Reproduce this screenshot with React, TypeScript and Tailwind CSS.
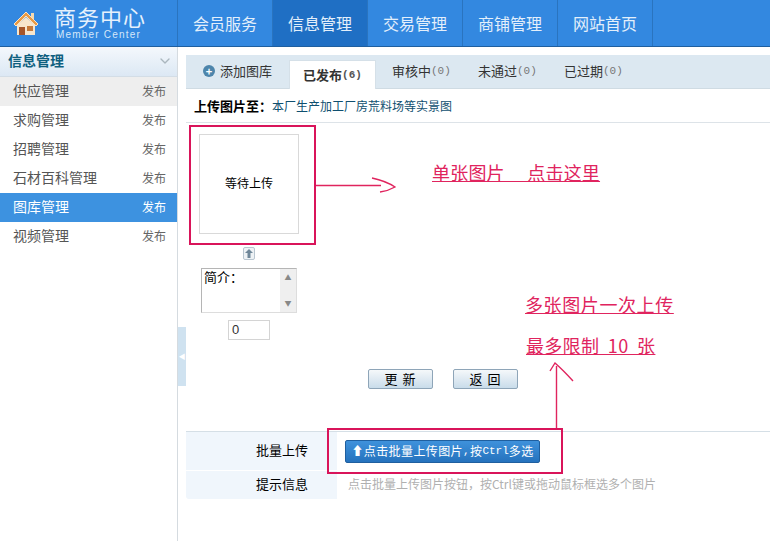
import { ChevronDown } from 'lucide-react';

const navItems = ['会员服务', '信息管理', '交易管理', '商铺管理', '网站首页'];
const sideItems = ['供应管理', '求购管理', '招聘管理', '石材百科管理', '图库管理', '视频管理'];
const tabs = ['审核中', '未通过', '已过期'];

function HomeIcon() {
  return (
    <svg width="26" height="25" viewBox="0 0 26 25">
      <path d="M13 1 L25 13 L23 15 L13 5 L3 15 L1 13 Z" fill="#e89a45" stroke="#fbe3c4" strokeWidth="1" />
      <path d="M18 2h3v7l-3-3z" fill="#f3d9b0" />
      <path d="M4 14 L13 6 L22 14 V24 H4 Z" fill="#f7e6cc" />
      <rect x="6" y="16" width="6" height="8" fill="#a5562a" />
      <rect x="14" y="15" width="6" height="5" fill="#c77a3a" />
    </svg>
  );
}

export default function App() {
  return (
    <div className="relative w-[770px] h-[541px] overflow-hidden bg-white font-['Noto_Sans_CJK_SC',sans-serif]">
      {/* top bar */}
      <header className="flex h-[47px] bg-[#3388e0] border-b border-[#1f5f9f]">
        <div className="flex w-[178px] items-center gap-[15px] pl-[13px] border-r border-[#2a74bf]">
          <HomeIcon />
          <div>
            <div className="text-[22px] leading-[20px] tracking-[1px] text-[#e6f1fc]">商务中心</div>
            <div className="mt-[3px] pl-[2px] text-[10px] leading-[12px] tracking-[1.2px] font-['Liberation_Sans',sans-serif] text-[#d5e7f9]">Member Center</div>
          </div>
        </div>
        {navItems.map((item) => (
          <div
            key={item}
            className={`flex w-[95px] items-center justify-center border-r border-[#2a74bf] text-[16px] text-[#e3effb] ${item === '信息管理' ? 'bg-[#1f6fc4]' : ''}`}
          >
            {item}
          </div>
        ))}
      </header>

      <div className="flex h-[494px]">
        {/* sidebar */}
        <aside className="w-[178px] shrink-0 border-r border-[#d5dbe0]">
          <div className="flex h-[30px] items-center justify-between pb-[2px] pl-2 pr-[4px] border-b border-[#d3dde6] bg-gradient-to-b from-[#f4f8fc] to-[#dce8f4]">
            <span className="text-[14px] font-bold text-[#0f5f7f]">信息管理</span>
            <ChevronDown size={16} className="text-[#aab6be]" />
          </div>
          {sideItems.map((item, i) => {
            const active = item === '图库管理';
            return (
              <div
                key={item}
                className={`flex h-[29px] items-center justify-between pb-[2px] pl-[13px] pr-[11px] text-[14px] ${active ? 'bg-[#3d92e0] text-white' : 'text-[#555]'} ${i === 0 ? 'bg-[#eeeeee]' : ''}`}
              >
                <span>{item}</span>
                <span className={`text-[12px] ${active ? 'text-white' : 'text-[#666]'}`}>发布</span>
              </div>
            );
          })}
        </aside>

        {/* main */}
        <main className="relative flex-1 pt-2">
          <div className="absolute left-0 top-[280px] flex h-[59px] w-[8px] items-center justify-center bg-[#cfe2f0] text-[7px] text-white">◀</div>

          <div className="ml-2 flex h-[34px] items-end border-b border-[#cfdbe3] bg-[#dce8f1] pl-[17px]">
            <div className="flex h-[34px] w-[86px] items-center gap-[5px] text-[13px] text-[#333]">
              <span className="flex h-[12px] w-[12px] items-center justify-center rounded-full bg-[#4d85ab] text-[11px] font-bold leading-none text-white">+</span>
              添加图库
            </div>
            <div className="-mb-px flex h-[29px] w-[87px] items-center justify-center border-x border-t border-[#d5e0e8] bg-white text-[13px] font-bold text-[#333]">
              已发布<span className="font-['Liberation_Mono',monospace] text-[11px] text-[#555]">(6)</span>
            </div>
            {tabs.map((t) => (
              <div key={t} className="flex h-[34px] w-[86px] items-center pl-[16px] text-[13px] text-[#333]">
                {t}<span className="font-['Liberation_Mono',monospace] text-[11px] text-[#777]">(0)</span>
              </div>
            ))}
          </div>

          <div className="ml-2 flex h-[34px] items-center border-b border-[#dde3e8] pl-2 text-[12px] text-[#0f4f6f]">
            <b className="text-[13px] text-black">上传图片至：</b>本厂生产加工厂房荒料场等实景图
          </div>

          <div className="ml-[21px] mt-[11px] flex h-[100px] w-[100px] items-center justify-center border border-[#d9d9d9] pb-[3px] text-[12px] text-black">
            等待上传
          </div>
          <div className="ml-[65px] mt-[13px] flex h-[13px] w-[12px] items-center justify-center rounded-[2px] border border-[#b9c6d0] bg-[#eef2f5]">
            <svg width="8" height="9" viewBox="0 0 8 9">
              <path d="M4 0 L8 4 H5.5 V9 H2.5 V4 H0 Z" fill="#6f8799" />
            </svg>
          </div>

          <div className="ml-[23px] mt-[8px] flex h-[45px] w-[96px] border border-[#b5b5b5] border-r-[#dddddd] border-b-[#dddddd]">
            <div className="flex-1 pl-[2px] text-[13px] leading-[16px] text-black">简介：</div>
            <div className="flex w-[16px] flex-col items-center justify-between bg-[#efefef] py-[5px] text-[7px] leading-none text-[#888]">
              <span>▲</span>
              <span>▼</span>
            </div>
          </div>
          <div className="ml-[50px] mt-[7px] flex h-[20px] w-[42px] items-center border border-[#d4d4d4] pl-[3px] font-['Liberation_Sans',sans-serif] text-[13px] text-[#333]">0</div>

          <div className="ml-[190px] mt-[29px] flex gap-[20px]">
            <div className="flex h-[20px] w-[65px] items-center justify-center rounded-[2px] border border-[#8ea5b8] bg-gradient-to-b from-[#f5f8fa] to-[#c9dcea] text-[13px] tracking-[1px] text-black">更 新</div>
            <div className="flex h-[20px] w-[65px] items-center justify-center rounded-[2px] border border-[#8ea5b8] bg-gradient-to-b from-[#f5f8fa] to-[#c9dcea] text-[13px] tracking-[1px] text-black">返 回</div>
          </div>

          <div className="ml-2 mt-[42px] border-t border-[#d5dfe6]">
            <div className="flex h-[38px]">
              <div className="flex w-[151px] items-center justify-end bg-[#f0f6fc] pb-[2px] pr-[29px] text-[13px] text-black">批量上传</div>
              <div className="flex flex-1 items-center pl-[8px]">
                <div className="flex h-[23px] w-[195px] items-center justify-center rounded-[2px] border border-[#1f5f9f] bg-gradient-to-b from-[#3f92dc] to-[#2572bd] text-[12px] tracking-[0.4px] text-white">
                  ⬆点击批量上传图片<span className="font-['Liberation_Mono',monospace] text-[11px]">,</span>按<span className="font-['Liberation_Mono',monospace] text-[11px] tracking-normal">Ctrl</span>多选
                </div>
              </div>
            </div>
            <div className="mt-px flex h-[28px]">
              <div className="flex w-[151px] items-center justify-end rounded-bl-[3px] bg-[#f0f6fc] pb-[2px] pr-[29px] text-[13px] text-black">提示信息</div>
              <div className="flex flex-1 items-center pb-[2px] pl-[11px] text-[12px] text-[#b0b0b0]">点击批量上传图片按钮，按Ctrl键或拖动鼠标框选多个图片</div>
            </div>
          </div>
        </main>
      </div>

      {/* hand-drawn annotations on top of the page */}
      <div className="absolute left-[189px] top-[125px] h-[120px] w-[127px] border-[2px] border-[#d9145a]" />
      <div className="absolute left-[327px] top-[428px] h-[46px] w-[236px] border-[2px] border-[#d9145a]" />
      <svg className="absolute left-0 top-0 pointer-events-none" width="770" height="541" fill="none" stroke="#e0245e" strokeWidth="1.4">
        <path d="M316 185.5 H381 M372 178 Q386 181 395 187 Q388 191 380 192" />
        <path d="M556.5 428 V366 M550 371 L555 363 Q563 370 573 381" />
      </svg>
      <div className="absolute left-[432px] top-[161px] text-[18px] leading-[22px] tracking-[0.2px] text-[#e0245e] underline whitespace-pre">单张图片　 点击这里</div>
      <div className="absolute left-[525px] top-[293px] text-[18px] leading-[22px] tracking-[0.6px] text-[#e0245e] underline">多张图片一次上传</div>
      <div className="absolute left-[526px] top-[334px] text-[18px] leading-[22px] tracking-[0.3px] text-[#e0245e] underline whitespace-pre">最多限制  10  张</div>
    </div>
  );
}
